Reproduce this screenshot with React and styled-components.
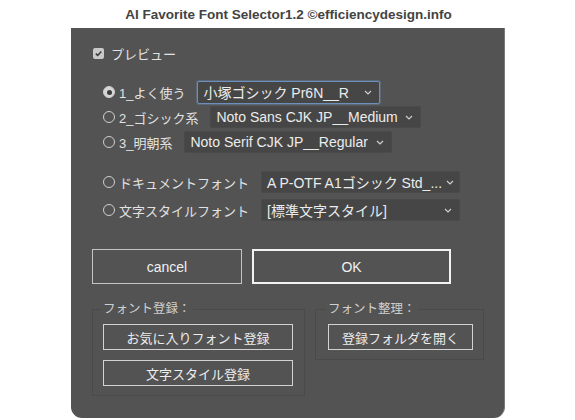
import React from "react";
import styled, { createGlobalStyle } from "styled-components";

const Global = createGlobalStyle`
  html, body { margin: 0; padding: 0; background: #ffffff; }
  body { font-family: "Liberation Sans", "Noto Sans CJK JP", sans-serif; }
  * { box-sizing: border-box; }
`;

const Window = styled.div`
  width: 575px;
  height: 420px;
  display: flex;
  flex-direction: column;
  align-items: center;
`;

const TitleBar = styled.div`
  height: 28px;
  width: 100%;
  display: flex;
  align-items: center;
  justify-content: center;
  font-size: 13.5px;
  font-weight: bold;
  color: #434343;
  padding-left: 2px;
`;

const Panel = styled.div`
  width: 434px;
  height: 390px;
  margin-left: 1px;
  background: #535353;
  border-right: 1px solid #7a7a7a;
  border-radius: 0 0 11px 11px;
  padding: 17px 21px 0 21px;
  display: flex;
  flex-direction: column;
  color: #e2e2e2;
  font-size: 13px;
`;

const CheckRow = styled.label`
  display: flex;
  align-items: center;
  gap: 7px;
  height: 16px;
  padding-left: 1px;
`;

const CheckBox = styled.span`
  width: 11px;
  height: 11px;
  border-radius: 2px;
  background: #c9c9c9;
  display: flex;
  align-items: center;
  justify-content: center;
`;

const Group = styled.div`
  display: flex;
  flex-direction: column;
  gap: ${(p) => p.$gap}px;
  margin-top: ${(p) => p.$top}px;
  padding-left: ${(p) => p.$indent}px;
`;

const Row = styled.div`
  display: flex;
  align-items: center;
  height: 24px;
  gap: ${(p) => p.$gap}px;
`;

const RadioLabel = styled.label`
  display: flex;
  align-items: center;
  gap: 4px;
  white-space: nowrap;
`;

const Radio = styled.span`
  width: 12px;
  height: 12px;
  border-radius: 50%;
  border: 1px solid #cfcfcf;
  background: ${(p) => (p.$on ? "#d6d6d6" : "transparent")};
  display: flex;
  align-items: center;
  justify-content: center;
  &::after {
    content: "";
    display: ${(p) => (p.$on ? "block" : "none")};
    width: 5px;
    height: 5px;
    border-radius: 50%;
    background: #3c3c3c;
  }
`;

const Select = styled.div`
  width: ${(p) => p.$w}px;
  height: ${(p) => (p.$active ? 23 : 22)}px;
  background: #464646;
  border: ${(p) => (p.$active ? "1px solid #6b8fba" : "1px solid #4a4a4a")};
  box-shadow: ${(p) => (p.$active ? "0 0 0 1px rgba(107,143,186,0.35)" : "none")};
  border-radius: 2px;
  display: flex;
  align-items: center;
  justify-content: space-between;
  gap: 4px;
  padding: 0 7px 0 5px;
  color: #ececec;
  font-size: 14px;
  white-space: nowrap;
  & > svg { flex: none; }
`;

const ButtonRow = styled.div`
  display: flex;
  gap: 10px;
  margin-top: 27px;
`;

const DialogButton = styled.button`
  width: ${(p) => p.$w}px;
  height: 35px;
  background: transparent;
  border: ${(p) => (p.$primary ? "2px solid #f2f2f2" : "1px solid #c4c4c4")};
  color: #f0f0f0;
  font-family: inherit;
  font-size: 14px;
  padding: 0;
`;

const Sections = styled.div`
  display: flex;
  gap: 10px;
  margin-top: 18px;
  align-items: flex-start;
`;

const Fieldset = styled.fieldset`
  width: ${(p) => p.$w}px;
  margin: 0;
  border: 1px solid #4a4a4a;
  padding: 8px ${(p) => p.$pr}px 9px ${(p) => p.$pl}px;
  display: flex;
  flex-direction: column;
  gap: 10px;
`;

const Legend = styled.legend`
  padding: 0 2px;
  margin-left: -2px;
  font-size: 12.5px;
  color: #cfcfcf;
  line-height: 14px;
`;

const SmallButton = styled.button`
  width: ${(p) => p.$w}px;
  height: 26px;
  background: transparent;
  border: 1.5px solid #d2d2d2;
  color: #ededed;
  font-family: inherit;
  font-size: 13px;
  padding: 0;
`;

const Chevron = () => (
  <svg width="8" height="5" viewBox="0 0 8 5">
    <path d="M1 1 L4 4 L7 1" fill="none" stroke="#cfcfcf" strokeWidth="1.2" />
  </svg>
);

const Check = () => (
  <svg width="9" height="9" viewBox="0 0 9 9">
    <path d="M1.8 4.6 L3.7 6.4 L7.3 2.4" fill="none" stroke="#3a3a3a" strokeWidth="1.5" />
  </svg>
);

const topOptions = [
  { label: "1_よく使う", value: "小塚ゴシック Pr6N__R", w: 183, on: true },
  { label: "2_ゴシック系", value: "Noto Sans CJK JP__Medium", w: 211 },
  { label: "3_明朝系", value: "Noto Serif CJK JP__Regular", w: 208 },
];

const bottomOptions = [
  { label: "ドキュメントフォント", value: "A P-OTF A1ゴシック Std_...", w: 199 },
  { label: "文字スタイルフォント", value: "[標準文字スタイル]", w: 199 },
];

export default function App() {
  return (
    <>
      <Global />
      <Window>
        <TitleBar>AI Favorite Font Selector1.2 ©efficiencydesign.info</TitleBar>
        <Panel>
          <CheckRow>
            <CheckBox>
              <Check />
            </CheckBox>
            プレビュー
          </CheckRow>
          <Group $gap={1} $top={19} $indent={11}>
            {topOptions.map((o) => (
              <Row key={o.label} $gap={12}>
                <RadioLabel>
                  <Radio $on={o.on} />
                  {o.label}
                </RadioLabel>
                <Select $w={o.w} $active={o.on}>
                  {o.value}
                  <Chevron />
                </Select>
              </Row>
            ))}
          </Group>
          <Group $gap={4} $top={16} $indent={11}>
            {bottomOptions.map((o) => (
              <Row key={o.label} $gap={12}>
                <RadioLabel>
                  <Radio />
                  {o.label}
                </RadioLabel>
                <Select $w={o.w}>
                  {o.value}
                  <Chevron />
                </Select>
              </Row>
            ))}
          </Group>
          <ButtonRow>
            <DialogButton $w={150}>cancel</DialogButton>
            <DialogButton $w={199} $primary>
              OK
            </DialogButton>
          </ButtonRow>
          <Sections>
            <Fieldset $w={213} $pl={10} $pr={11}>
              <Legend>フォント登録：</Legend>
              <SmallButton $w={190}>お気に入りフォント登録</SmallButton>
              <SmallButton $w={190}>文字スタイル登録</SmallButton>
            </Fieldset>
            <Fieldset $w={169} $pl={12} $pr={10}>
              <Legend>フォント整理：</Legend>
              <SmallButton $w={145}>登録フォルダを開く</SmallButton>
            </Fieldset>
          </Sections>
        </Panel>
      </Window>
    </>
  );
}
